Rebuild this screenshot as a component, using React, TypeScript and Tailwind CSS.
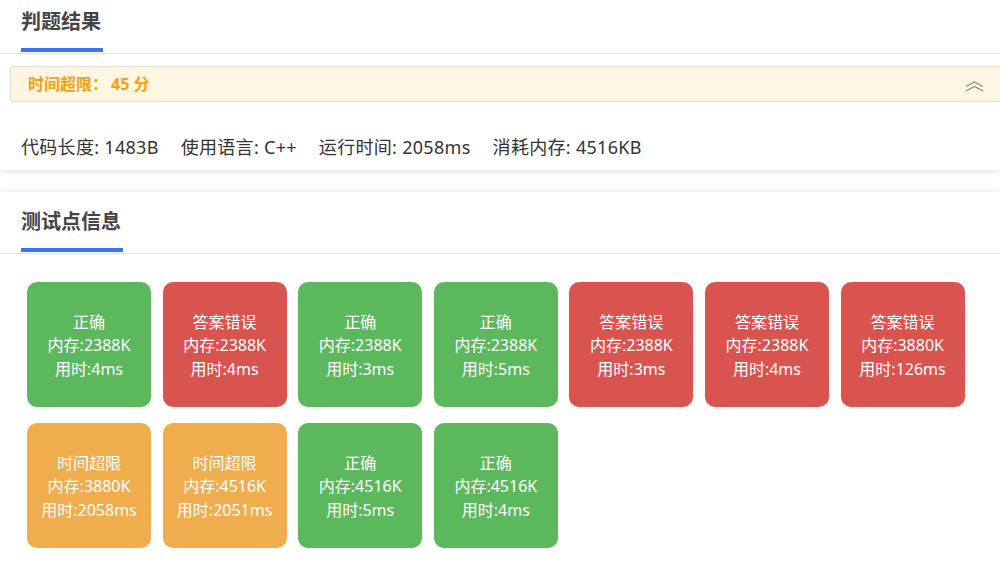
type Status = "ok" | "wa" | "tle";

const cases: { status: Status; mem: string; time: string }[] = [
  { status: "ok", mem: "2388K", time: "4ms" },
  { status: "wa", mem: "2388K", time: "4ms" },
  { status: "ok", mem: "2388K", time: "3ms" },
  { status: "ok", mem: "2388K", time: "5ms" },
  { status: "wa", mem: "2388K", time: "3ms" },
  { status: "wa", mem: "2388K", time: "4ms" },
  { status: "wa", mem: "3880K", time: "126ms" },
  { status: "tle", mem: "3880K", time: "2058ms" },
  { status: "tle", mem: "4516K", time: "2051ms" },
  { status: "ok", mem: "4516K", time: "5ms" },
  { status: "ok", mem: "4516K", time: "4ms" },
];

const statusLabel: Record<Status, string> = {
  ok: "正确",
  wa: "答案错误",
  tle: "时间超限",
};

const statusBg: Record<Status, string> = {
  ok: "bg-[#5cb85c]",
  wa: "bg-[#d9534f]",
  tle: "bg-[#f0ad4e]",
};

function TabHeader({ title, barWidth }: { title: string; barWidth: string }) {
  return (
    <div className="flex h-[54px] border-b border-[#dcdfe6] px-[21px]">
      <div className="relative flex h-full flex-col">
        <h2 className="pt-[7px] text-[20px] font-bold leading-[30px] text-[#444]">
          {title}
        </h2>
        <div className={`absolute bottom-[1px] left-0 h-[4px] bg-[#3f73f5] ${barWidth}`} />
      </div>
    </div>
  );
}

function DoubleChevronUp() {
  return (
    <svg width="19" height="11" viewBox="0 0 19 11" fill="none" stroke="#8a8a8a" strokeWidth="1.2">
      <path d="M1 5.5 L9.5 1 L18 5.5" />
      <path d="M1 10 L9.5 5.5 L18 10" />
    </svg>
  );
}

export default function App() {
  return (
    <div
      className="flex h-[574px] w-[1000px] flex-col overflow-hidden bg-white"
      style={{ fontFamily: '"Segoe UI", "Noto Sans", "Noto Sans CJK SC", sans-serif' }}
    >
      <section className="relative z-10 bg-white shadow-[0_2px_6px_rgba(0,0,0,0.12)]">
        <TabHeader title="判题结果" barWidth="w-[82px]" />
        <div className="pl-[10px] pt-[12px]">
          <div className="flex h-[36px] items-center justify-between rounded-l-[4px] border border-r-0 border-[#e2e0d6] bg-[#fcf6e3] pl-[17px] pr-[16px]">
            <span className="text-[16px] font-bold text-[#f5a10e]">
              时间超限：<span className="ml-[3px]">45 分</span>
            </span>
            <span className="pt-[4px]">
              <DoubleChevronUp />
            </span>
          </div>
        </div>
        <div className="flex h-[68px] items-center gap-[22px] px-[21px] pt-[22px] text-[18px] tracking-[0.3px] text-[#333]">
          <span>代码长度: 1483B</span>
          <span>使用语言: C++</span>
          <span>运行时间: 2058ms</span>
          <span>消耗内存: 4516KB</span>
        </div>
      </section>

      <section className="mt-[22px] flex-1 bg-white pt-[8px] shadow-[0_-2px_6px_rgba(0,0,0,0.08)]">
        <TabHeader title="测试点信息" barWidth="w-[102px]" />
        <div className="grid grid-cols-[repeat(7,124px)] gap-x-[11.6px] gap-y-[16px] px-[27px] pt-[28px]">
          {cases.map((c, i) => (
            <div
              key={i}
              className={`flex h-[125px] flex-col items-center justify-center rounded-[10px] pt-[3px] text-[16px] leading-[23.5px] text-white ${statusBg[c.status]}`}
            >
              <span>{statusLabel[c.status]}</span>
              <span>内存:{c.mem}</span>
              <span>用时:{c.time}</span>
            </div>
          ))}
        </div>
      </section>
    </div>
  );
}
